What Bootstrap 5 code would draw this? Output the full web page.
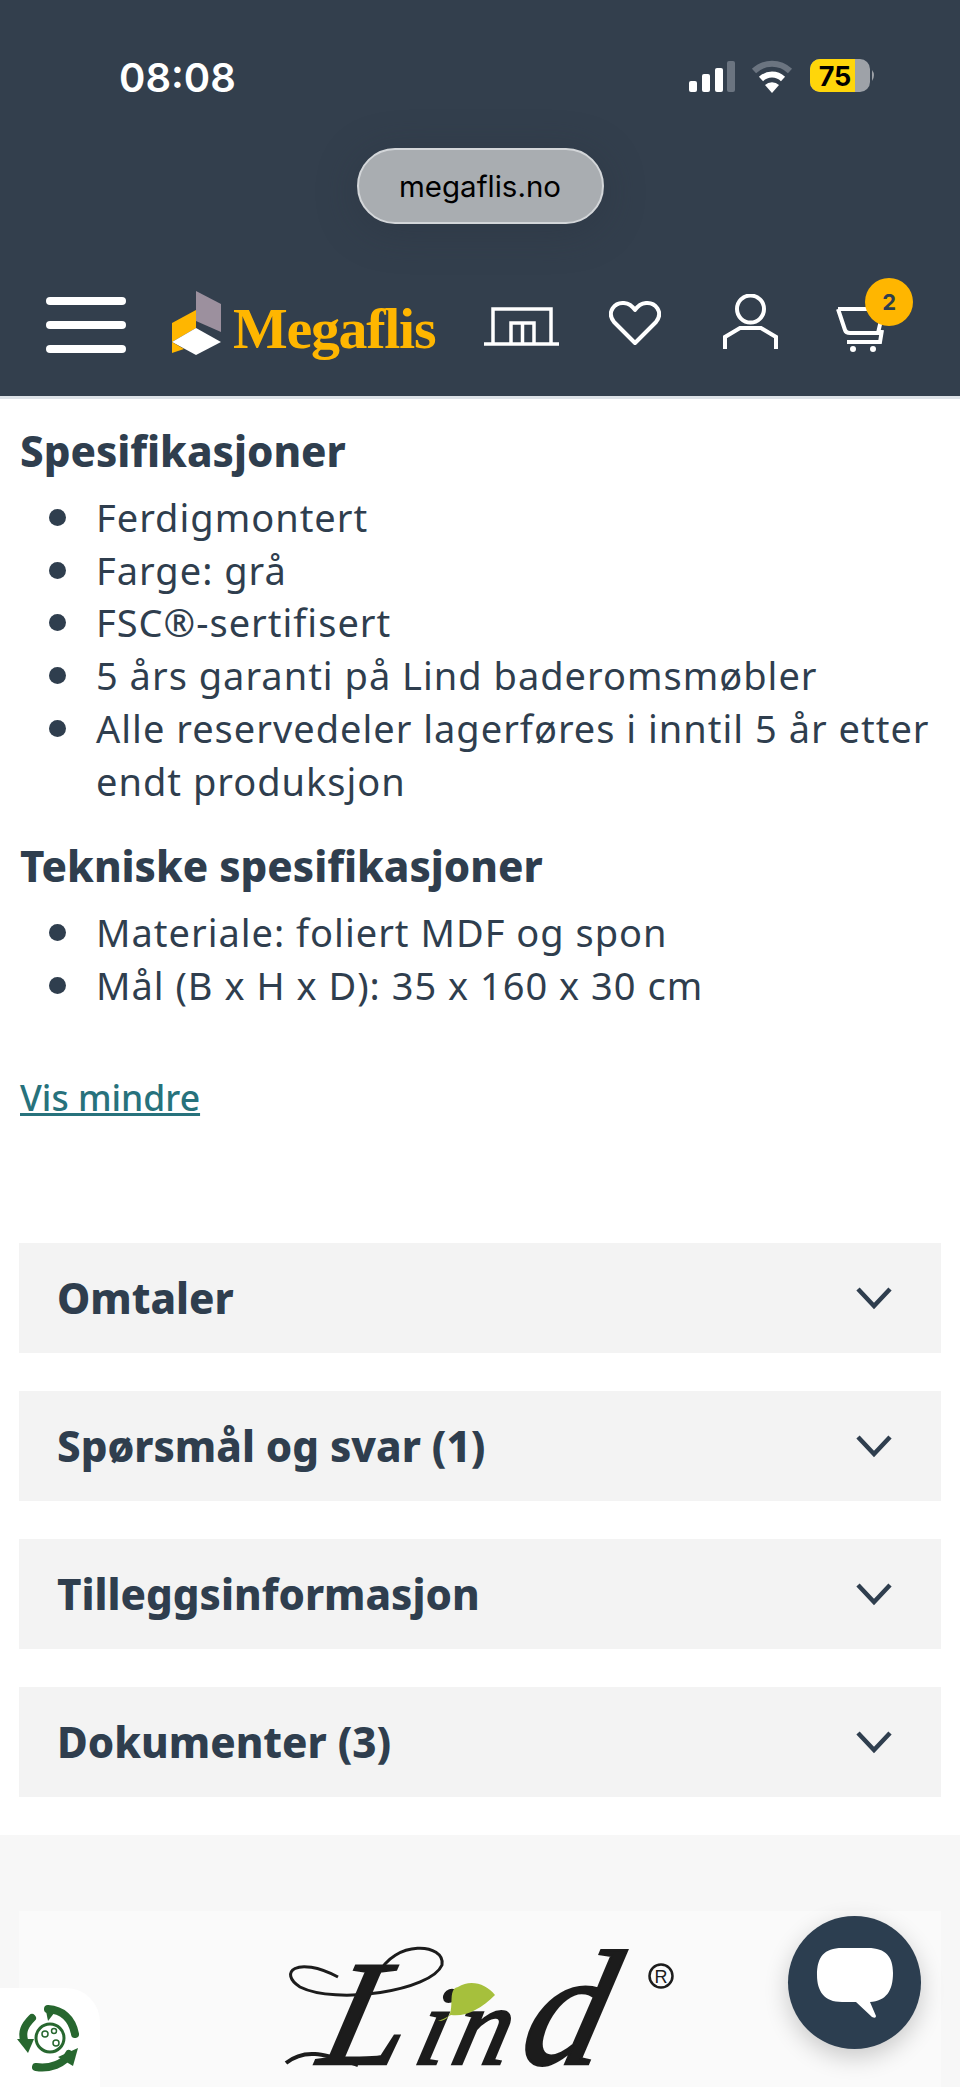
<!DOCTYPE html>
<html lang="en">
<head>
  <meta charset="UTF-8">
  <title>Megaflis</title>
  <link rel="stylesheet" href="https://cdn.jsdelivr.net/npm/bootstrap@5.3.2/dist/css/bootstrap.min.css">
  <style>
    html, body { height: 2087px; overflow: hidden; }
    body { font-family: "Noto Sans", sans-serif; color: #2f3e4e; position: relative; background: #fff; }
    .top-head { background: #333f4d; height: 399px; border-bottom: 3px solid #dde2e7; }
    .status-row { height: 148px; padding: 54px 80px 0 119px; align-items: flex-start; }
    .clock { font-family: Inter, sans-serif; font-weight: 600; font-size: 40px; line-height: 48px; color: #fff; }
    .url-pill { width: 247px; height: 76px; background: #a9adb1; border: 2px solid #d3d6d9; border-radius: 38px; font-family: Inter, sans-serif; font-size: 29.500px; color: #000; box-shadow: 0 6px 40px rgba(40,48,60,.35); }
    .nav-row { height: 172px; padding: 30px 0 0 46px; position: relative; }
    .burger { width: 80px; gap: 16px; }
    .burger span { display: block; height: 8px; border-radius: 4px; background: #fff; }
    .brand { margin-left: 46px; gap: 12px; }
    .brand-mark { margin-top: -5px; }
    .brand-name { font-family: "Liberation Serif", serif; font-weight: 700; font-size: 58px; line-height: 64px; color: #ffb600; letter-spacing: -1.300px; padding-top: 8px; }
    .nav-icons { margin: -11px 0 0 49px; }
    .cart-count { position: absolute; top: -28px; right: -27px; width: 48px; height: 48px; background: #ffb600; color: #2f3e4e; font: 700 22px/48px Inter, sans-serif; text-align: center; border-radius: 50%; }
    .spec-title { font-size: 42px; font-weight: 800; line-height: 50px; margin: 0 0 15px 20px; }
    .spec-list { margin: 0; padding: 0 0 0 96px; list-style: none; font-size: 38px; line-height: 52.700px; letter-spacing: 1px; }
    .spec-list li { position: relative; }
    .spec-list li::before { content: ""; position: absolute; left: -47px; top: 18px; width: 17px; height: 17px; border-radius: 50%; background: #2f3e4e; }
    .spec-one { padding-top: 27px; }
    .spec-two { padding-top: 34px; }
    .less-link { display: inline-block; margin: 63px 0 0 20px; font-size: 35.500px; font-weight: 500; line-height: 44px; color: #27727c; }
    .fold-list { padding: 124px 19px 0; gap: 38px; }
    .fold-row { height: 110px; background: #f3f3f3; padding: 0 49px 0 38px; font-size: 42px; font-weight: 800; }
    .brand-band { margin-top: 38px; height: 262px; background: #f7f7f7; padding: 76px 19px 0; }
    .brand-box { height: 186px; background: #fafafa; }
    .lind-name { font-family: "Liberation Serif", serif; font-style: italic; font-weight: 400; }
    .chat-btn { position: absolute; left: 788px; top: 1916px; width: 133px; height: 133px; border-radius: 50%; background: #2c3e50; box-shadow: 0 8px 24px rgba(0,0,0,.2); }
    .eco-tab { position: absolute; left: 0; top: 1988px; width: 100px; height: 99px; background: #fff; border-top-right-radius: 34px; }
  </style>
</head>
<body>

<header class="top-head">
  <div class="status-row d-flex justify-content-between">
    <div class="clock">08:08</div>
    <div class="d-flex align-items-center" style="height:48px">
      <svg width="192" height="40" viewBox="0 0 192 40">
        <rect x="1" y="23" width="8" height="11" rx="2" fill="#fff"/>
        <rect x="14" y="16" width="8" height="18" rx="2" fill="#fff"/>
        <rect x="27" y="10" width="8" height="24" rx="2" fill="#fff"/>
        <rect x="39" y="3" width="8" height="31" rx="2" fill="#6b7480"/>
        <path d="M66 13 a26 26 0 0 1 36 0" fill="none" stroke="#6b7480" stroke-width="6"/>
        <path d="M73 21 a16 16 0 0 1 22 0" fill="none" stroke="#fff" stroke-width="6"/>
        <path d="M77 27 a10 10 0 0 1 14 0 l-7 8z" fill="#fff"/>
        <rect x="122" y="1" width="60" height="33" rx="10" fill="#9ea2a8"/>
        <path d="M132 1 h35 v33 h-35 a10 10 0 0 1 -10 -10 v-13 a10 10 0 0 1 10 -10z" fill="#ffd60a"/>
        <path d="M184 12 q4 5 0 11z" fill="#9ea2a8"/>
        <text x="147" y="28" text-anchor="middle" font-family="Inter, sans-serif" font-size="27" font-weight="700" fill="#000">75</text>
      </svg>
    </div>
  </div>
  <div class="d-flex justify-content-center">
    <div class="url-pill d-flex align-items-center justify-content-center">megaflis.no</div>
  </div>
  <div class="nav-row d-flex align-items-center">
    <div class="burger d-flex flex-column"><span></span><span></span><span></span></div>
    <div class="brand d-flex align-items-center">
      <svg class="brand-mark" width="49" height="64" viewBox="0 0 49 64">
        <path d="M24 0 L49 13 V41 L24 30z" fill="#9c909e"/>
        <path d="M0 32 L24 19 V37 L0 51z" fill="#ffb600"/>
        <path d="M24 37 L49 51 L24 64 L0 51z" fill="#fff"/>
        <path d="M0 51 L12 58 L0 62z" fill="#ffb600"/>
      </svg>
      <span class="brand-name">Megaflis</span>
    </div>
    <div class="nav-icons d-flex align-items-end">
      <svg width="75" height="40" viewBox="0 0 75 40" fill="none" stroke="#fff" stroke-width="3.500">
        <path d="M0 38 H75 M9 38 V3 H67 V38 M27 38 V17 H50 V38 M38.500 17 V38"/>
      </svg>
      <svg style="margin-left:50px" width="52" height="46" viewBox="0 0 52 46" fill="none" stroke="#fff" stroke-width="4">
        <path d="M26 43 L5 22 C-3 12 6 2 15 3 C20 3.500 24 7 26 10 C28 7 32 3.500 37 3 C46 2 55 12 47 22z" stroke-linejoin="round"/>
      </svg>
      <svg style="margin:0 0 -5px 62px" width="55" height="57" viewBox="0 0 55 57" fill="none" stroke="#fff" stroke-width="4">
        <circle cx="27.500" cy="15" r="13.500"/>
        <path d="M2 55 V43 L17 34 H38 L53 43 V55"/>
      </svg>
      <div class="position-relative" style="margin:0 0 -6px 58px">
        <svg class="d-block" width="50" height="46" viewBox="0 0 50 46" fill="none" stroke="#fff" stroke-width="4">
          <path d="M2 3 H40 M2 3 L9 24 Q10 27 14 27 H42 L46 10 M11 36 H44 L46 24"/>
          <circle cx="17" cy="43" r="3" fill="#fff" stroke="none"/>
          <circle cx="37" cy="43" r="3" fill="#fff" stroke="none"/>
        </svg>
        <span class="cart-count">2</span>
      </div>
    </div>
  </div>
</header>

<main>
  <div class="spec-one">
    <h2 class="spec-title">Spesifikasjoner</h2>
    <ul class="spec-list">
      <li>Ferdigmontert</li>
      <li>Farge: grå</li>
      <li>FSC®-sertifisert</li>
      <li>5 års garanti på Lind baderomsmøbler</li>
      <li>Alle reservedeler lagerføres i inntil 5 år etter<br>endt produksjon</li>
    </ul>
  </div>
  <div class="spec-two">
    <h2 class="spec-title">Tekniske spesifikasjoner</h2>
    <ul class="spec-list">
      <li>Materiale: foliert MDF og spon</li>
      <li>Mål (B x H x D): 35 x 160 x 30 cm</li>
    </ul>
  </div>
  <a class="less-link" href="#">Vis mindre</a>

  <div class="fold-list d-flex flex-column">
    <div class="fold-row d-flex align-items-center justify-content-between"><span>Omtaler</span><svg width="36" height="24" viewBox="0 0 36 24" fill="none" stroke="#2f3e4e" stroke-width="4.500"><path d="M2 3 L18 20 L34 3"/></svg></div>
    <div class="fold-row d-flex align-items-center justify-content-between"><span>Spørsmål og svar (1)</span><svg width="36" height="24" viewBox="0 0 36 24" fill="none" stroke="#2f3e4e" stroke-width="4.500"><path d="M2 3 L18 20 L34 3"/></svg></div>
    <div class="fold-row d-flex align-items-center justify-content-between"><span>Tilleggsinformasjon</span><svg width="36" height="24" viewBox="0 0 36 24" fill="none" stroke="#2f3e4e" stroke-width="4.500"><path d="M2 3 L18 20 L34 3"/></svg></div>
    <div class="fold-row d-flex align-items-center justify-content-between"><span>Dokumenter (3)</span><svg width="36" height="24" viewBox="0 0 36 24" fill="none" stroke="#2f3e4e" stroke-width="4.500"><path d="M2 3 L18 20 L34 3"/></svg></div>
  </div>

  <div class="brand-band">
    <div class="brand-box d-flex justify-content-center">
      <svg width="420" height="157" viewBox="0 0 420 157" style="margin:18px 0 0 -8px">
        <path d="M72 48 C30 26 12 44 34 58 C70 76 165 62 176 36 C180 14 128 10 112 46" fill="none" stroke="#1c1c1c" stroke-width="3"/>
        <path d="M20 134 C40 118 60 126 92 136" fill="none" stroke="#1c1c1c" stroke-width="4"/>
        <g transform="translate(0,135) skewX(-14)">
          <text class="lind-name" y="0" fill="#1c1c1c" stroke="#1c1c1c" stroke-width="2.500"><tspan x="50" font-size="150">L</tspan><tspan font-size="112" dx="12" letter-spacing="6">in</tspan><tspan font-size="164" dx="6">d</tspan></text>
        </g>
        <path d="M172 92 C195 92 178 60 192 58 C205 50 220 55 229 66 C215 80 200 88 185 86 Q178 90 172 92z" fill="#a6c03c"/>
        <circle cx="395" cy="47" r="11.500" fill="none" stroke="#1c1c1c" stroke-width="2.500"/>
        <text x="395" y="53.500" text-anchor="middle" font-family="Liberation Sans, sans-serif" font-size="18" fill="#1c1c1c">R</text>
      </svg>
    </div>
  </div>
</main>

<div class="eco-tab d-flex align-items-center justify-content-center">
  <svg width="68" height="68" viewBox="0 0 68 68" fill="none" stroke="#27672f">
    <circle cx="34" cy="34" r="14" stroke-width="3"/>
    <circle cx="29" cy="30" r="3" stroke-width="1.500"/>
    <circle cx="38" cy="27" r="2.500" stroke-width="1.500"/>
    <circle cx="40" cy="39" r="3" stroke-width="1.500"/>
    <path d="M16 14 C8 22 6 28 8 36" stroke-width="8" stroke-linecap="round"/>
    <path d="M1 35 L18 35 L12 49z" fill="#27672f" stroke="none"/>
    <path d="M32 5 C46 6 56 14 59 30" stroke-width="8" stroke-linecap="round"/>
    <path d="M29 2 L42 4 L32 17z" fill="#27672f" stroke="none"/>
    <path d="M20 63 C34 65 48 60 53 50" stroke-width="8" stroke-linecap="round"/>
    <path d="M42 53 L62 44 L57 62z" fill="#27672f" stroke="none"/>
  </svg>
</div>

<button class="chat-btn btn p-0 border-0 d-flex align-items-center justify-content-center" aria-label="Chat">
  <svg width="78" height="72" viewBox="0 0 78 72">
    <path d="M26 1 H52 C70 1 77 10 77 26 C77 44 70 54 54 55 L60 69 Q60 72 56 70 L40 55 H26 C8 55 1 44 1 28 C1 10 8 1 26 1z" fill="#fff"/>
  </svg>
</button>

</body>
</html>
